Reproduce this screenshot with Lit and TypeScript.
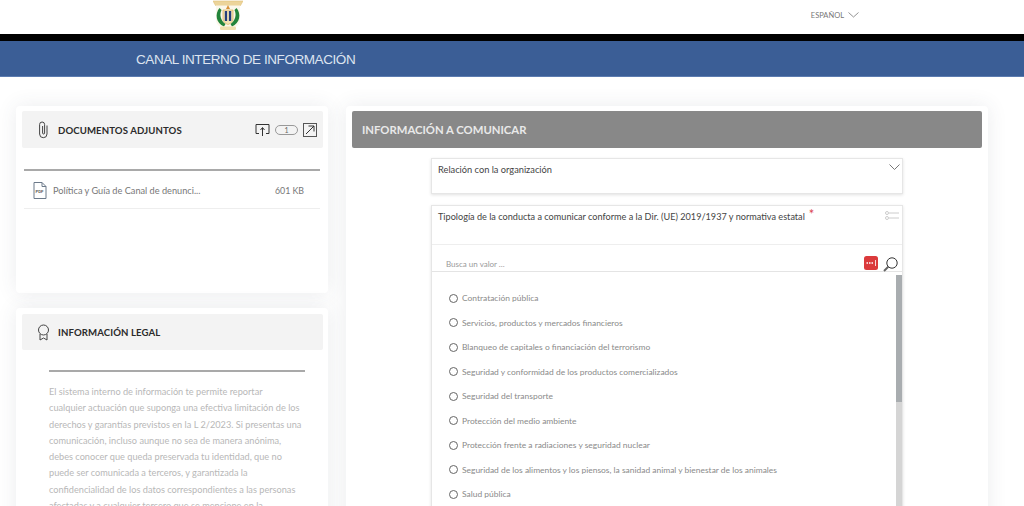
import { LitElement, html, css, svg } from "lit";
import { customElement } from "lit/decorators.js";

const OPTIONS = [
  "Contratación pública",
  "Servicios, productos y mercados financieros",
  "Blanqueo de capitales o financiación del terrorismo",
  "Seguridad y conformidad de los productos comercializados",
  "Seguridad del transporte",
  "Protección del medio ambiente",
  "Protección frente a radiaciones y seguridad nuclear",
  "Seguridad de los alimentos y los piensos, la sanidad animal y bienestar de los animales",
  "Salud pública",
];

const LEGAL = [
  "El sistema interno de información te permite reportar",
  "cualquier actuación que suponga una efectiva limitación de los",
  "derechos y garantías previstos en la L 2/2023. Si presentas una",
  "comunicación, incluso aunque no sea de manera anónima,",
  "debes conocer que queda preservada tu identidad, que no",
  "puede ser comunicada a terceros, y garantizada la",
  "confidencialidad de los datos correspondientes a las personas",
  "afectadas y a cualquier tercero que se mencione en la",
];

const logo = svg`<svg class="logo" width="30" height="31" viewBox="0 0 30 31">
  <path d="M0 1h30l-2.500 4.500h-25z" fill="#ecd49a" stroke="#e0bf75" stroke-width=".6"/>
  <path d="M3 5.500h24V20c0 5-5 8.500-12 10C8 28.500 3 25 3 20z" fill="#fbf7ea"/>
  <path d="M6.500 8C1.500 14 3 23 11 26.500l1.500-2.500C8 21 6 15 8.500 10z" fill="#23843a"/>
  <path d="M23.500 8c5 6 3.500 15-4.500 18.500L17.500 24c4.500-3 6.500-9 4-14z" fill="#23843a"/>
  <path d="M10 10h10v9c0 3-2.500 4.500-5 5.500-2.500-1-5-2.500-5-5.500z" fill="#f3e3b4" stroke="#d8ae5a" stroke-width=".7"/>
  <rect x="11.800" y="11" width="2.300" height="10" fill="#243f7c"/>
  <rect x="15.900" y="11" width="2.300" height="10" fill="#243f7c"/>
  <path d="M15 5l2 4h-4z" fill="#d8923a"/>
  <rect x="7" y="26.500" width="16" height="3.500" rx="1.200" fill="#f0dfae"/>
</svg>`;

@customElement("app-root")
export class AppRoot extends LitElement {
  static styles = css`
    :host {
      display: block;
      width: 1024px;
      height: 506px;
      overflow: hidden;
      background: #fff;
      font-family: "Lato", "Liberation Sans", sans-serif;
      color: #555;
    }
    .top {
      height: 34px;
      display: grid;
      grid-template-columns: 213px 1fr auto;
    }
    .logo { display: block; }
    .lang {
      display: flex;
      align-items: center;
      gap: 4px;
      height: 30px;
      padding-right: 165px;
      font: 7.500px "Lato", sans-serif;
      color: #777;
    }
    .black { height: 7px; background: #000; }
    .blue {
      height: 36px;
      box-sizing: border-box;
      background: #3b5e96;
      border-bottom: 1px solid #5c7cb0;
      padding-left: 136px;
      font: 13.500px/37px "Liberation Sans", sans-serif;
      letter-spacing: -0.43px;
      color: #dde4f0;
    }
    .page {
      display: grid;
      grid-template-columns: 312px 642px;
      gap: 18px;
      padding: 29px 0 0 16px;
    }
    .col { display: flex; flex-direction: column; gap: 15px; }
    .card {
      background: #fff;
      border-radius: 4px;
      box-shadow: 0 0 20px rgba(60, 70, 90, 0.1);
      padding: 5px 5px 5px 6px;
      box-sizing: border-box;
    }
    .docs { height: 187px; }
    .legal { height: 400px; padding-top: 6px; }
    .main { height: 500px; padding: 5px 6px; }
    .panel {
      height: 37px;
      background: #f3f3f3;
      border-radius: 2px;
      display: flex;
      align-items: center;
      padding-left: 15px;
      font-size: 9.600px;
      font-weight: 700;
      color: #2b2b2b;
      letter-spacing: 0.1px;
    }
    .legal .panel { height: 36px; }
    .panel .title { margin-left: 8px; padding-top: 1px; }
    .panel .spacer { flex: 1; }
    .tools { display: flex; align-items: center; gap: 5px; padding-right: 6px; }
    .pill {
      width: 21px;
      height: 8px;
      border: 1px solid #999;
      border-radius: 6px;
      font-size: 7px;
      line-height: 8px;
      text-align: center;
      color: #666;
      font-weight: 400;
    }
    .rule { height: 2px; background: #a9a9a9; }
    .docs .rule { margin: 21px 3px 0 2px; }
    .file {
      margin: 0 3px 0 2px;
      height: 36px;
      border-bottom: 1px solid #eee;
      display: flex;
      align-items: center;
      padding: 1px 8px 0 9px;
      font-size: 9.200px;
      color: #777;
      gap: 6px;
    }
    .file .name { flex: 1; }
    .file .size { padding-right: 8px; font-size: 8.800px; }
    .legal .rule { margin: 20px 18px 0 27px; }
    .legal p {
      margin: 12px 10px 0 27px;
      font-size: 9.200px;
      line-height: 16.300px;
      color: #b8b8b8;
      white-space: nowrap;
    }
    .band {
      height: 37px;
      background: #888;
      border-radius: 2px;
      padding-left: 10px;
      font-size: 11.300px;
      line-height: 37px;
      font-weight: 700;
      color: #e9e9e9;
    }
    .form { width: 472px; margin: 10px 0 0 79px; display: flex; flex-direction: column; gap: 11px; }
    .field {
      background: #fff;
      border: 1px solid #e6e6e6;
      box-shadow: 0 1px 3px rgba(0, 0, 0, 0.12);
      box-sizing: border-box;
    }
    .f1 {
      height: 36px;
      padding: 5px 6px;
      display: flex;
      justify-content: space-between;
      font-size: 9.250px;
      color: #444;
    }
    .f1 svg { margin-right: -4px; }
    .f2head {
      height: 39px;
      box-sizing: border-box;
      padding: 4px 6px;
      display: flex;
      justify-content: space-between;
      font-size: 9.150px;
      color: #444;
      border-bottom: 1px solid #eee;
    }
    .f2head svg { margin: 1px -3px 0 0; }
    .req { color: #d9434e; font-size: 13px; line-height: 8px; margin-left: 4px; vertical-align: 1px; }
    .search {
      height: 27px;
      border-bottom: 1px solid #e4e4e4;
      box-sizing: border-box;
      display: flex;
      align-items: flex-end;
      padding: 0 4px 0 14px;
      font-size: 8px;
      color: #999;
    }
    .search .ph { flex: 1; padding-bottom: 2px; }
    .badge { margin: 0 5px 1px 0; display: block; }
    .lens { display: block; margin-bottom: -1px; }
    .listwrap { display: grid; grid-template-columns: 1fr 6px; height: 300px; }
    ul { margin: 0; padding: 14px 0 0 17px; list-style: none; }
    li {
      height: 24.500px;
      display: flex;
      align-items: center;
      gap: 4px;
      font-size: 8.450px;
      color: #8a8a8a;
      box-sizing: border-box;
      white-space: nowrap;
    }
    .radio { width: 7px; height: 7px; border: 1px solid #666; border-radius: 50%; flex: none; }
    .track { background: #d5d5d5; margin-top: 3px; }
    .thumb { height: 127px; background: #a9adb0; }
  `;

  render() {
    return html`
      <div class="top">
        <span></span>
        <div>${logo}</div>
        <div class="lang">ESPAÑOL
          <svg width="11" height="6" viewBox="0 0 11 6"><path d="M.5.500l5 4.500 5-4.500" fill="none" stroke="#888" stroke-width=".9"/></svg>
        </div>
      </div>
      <div class="black"></div>
      <div class="blue">CANAL INTERNO DE INFORMACIÓN</div>
      <div class="page">
        <div class="col">
          <section class="card docs">
            <div class="panel">
              <svg width="13" height="18" viewBox="-1 0 13 18"><path d="M9 4.500v8.500a3.700 3.700 0 0 1-7.400 0V3.500a2.500 2.500 0 0 1 5 0V12a1 1 0 0 1-2 0V5" fill="none" stroke="#444" stroke-width="1"/></svg>
              <span class="title">DOCUMENTOS ADJUNTOS</span>
              <span class="spacer"></span>
              <div class="tools">
                <svg width="15" height="14" viewBox="0 0 15 14"><path d="M4 10.500H1V1.500h13v9h-3M7.500 13V5M5.500 7l2-2.500 2 2.500" fill="none" stroke="#333" stroke-width="1"/></svg>
                <span class="pill">1</span>
                <svg width="14" height="14" viewBox="0 0 14 14"><rect x=".5" y=".5" width="13" height="13" fill="none" stroke="#555"/><path d="M3 11l8-8M5.500 3H11v5.500" fill="none" stroke="#333" stroke-width="1"/></svg>
              </div>
            </div>
            <div class="rule"></div>
            <div class="file">
              <svg width="14" height="17" viewBox="0 0 14 17"><path d="M1 .5h8l4 4v12H1z" fill="#fff" stroke="#6c7a8a"/><path d="M9 .5v4h4" fill="none" stroke="#6c7a8a"/><text x="2.500" y="11" font-size="4" fill="#555" font-family="Liberation Sans" font-weight="700">PDF</text></svg>
              <span class="name">Política y Guía de Canal de denunci...</span>
              <span class="size">601 KB</span>
            </div>
          </section>
          <section class="card legal">
            <div class="panel">
              <svg width="13" height="17" viewBox="0 0 13 17"><circle cx="6.500" cy="6" r="5" fill="none" stroke="#444" stroke-width="1"/><path d="M3 10v6l3.500-2 3.500 2v-6" fill="none" stroke="#444" stroke-width="1"/></svg>
              <span class="title">INFORMACIÓN LEGAL</span>
            </div>
            <div class="rule"></div>
            <p>${LEGAL.map((l) => html`${l}<br />`)}</p>
          </section>
        </div>
        <section class="card main">
          <div class="band">INFORMACIÓN A COMUNICAR</div>
          <div class="form">
            <div class="field f1">
              <span>Relación con la organización</span>
              <svg width="11" height="7" viewBox="0 0 11 7"><path d="M.5.500l5 5 5-5" fill="none" stroke="#777" stroke-width="1"/></svg>
            </div>
            <div class="field">
              <div class="f2head">
                <span>Tipología de la conducta a comunicar conforme a la Dir. (UE) 2019/1937 y normativa estatal<span class="req">*</span></span>
                <svg width="14" height="9" viewBox="0 0 14 9"><g fill="none" stroke="#ccc"><circle cx="2" cy="2" r="1.500"/><circle cx="2" cy="7" r="1.500"/><path d="M4 2h10M4 7h10"/></g></svg>
              </div>
              <div class="search">
                <span class="ph">Busca un valor ...</span>
                <svg class="badge" width="14" height="14" viewBox="0 0 14 14"><rect width="14" height="14" rx="2.500" fill="#db3a3c"/><path d="M2.500 7h1.500M5 7h1.500M7.500 7h1.500" stroke="#fff" stroke-width="1.400"/><path d="M11.500 4v6" stroke="#fff" stroke-width=".8"/></svg>
                <svg class="lens" width="15" height="15" viewBox="0 0 15 15"><circle cx="9" cy="6" r="5.200" fill="none" stroke="#333" stroke-width="1"/><path d="M5.500 9.500L1 14" stroke="#666" stroke-width="2"/></svg>
              </div>
              <div class="listwrap">
                <ul>${OPTIONS.map((o) => html`<li><span class="radio"></span>${o}</li>`)}</ul>
                <div class="track"><div class="thumb"></div></div>
              </div>
            </div>
          </div>
        </section>
      </div>
    `;
  }
}
